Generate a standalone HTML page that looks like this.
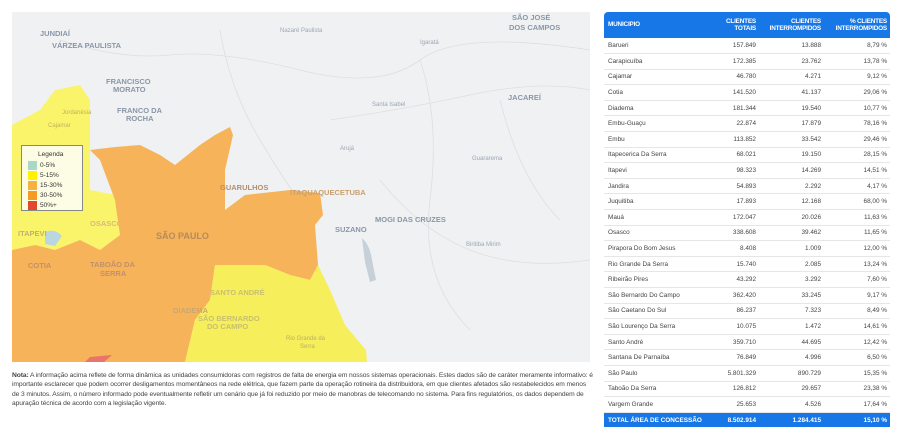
<!DOCTYPE html>
<html><head><meta charset="utf-8"><style>
*{margin:0;padding:0;box-sizing:border-box}
body{width:900px;height:428px;background:#fff;font-family:"Liberation Sans",sans-serif;position:relative;overflow:hidden}
.map{position:absolute;left:12px;top:12px;width:578px;height:350px;background:#f0f1f2;overflow:hidden}
.note{position:absolute;left:12px;top:371px;width:582px;font-size:6.7px;line-height:9.3px;color:#444;letter-spacing:-0.1px}
table{position:absolute;left:604px;top:12px;width:286px;border-collapse:collapse;font-size:6.4px;color:#444}
th{background:#1877e6;color:#fff;font-weight:bold;font-size:6.4px;line-height:7.5px;height:26px;text-align:right;padding:0 3px;letter-spacing:-0.2px}
th:first-child{text-align:left;border-radius:4px 0 0 0;padding-left:4px}
th:last-child{border-radius:0 4px 0 0}
td{height:15.6px;border-bottom:1px solid #e6e6e6;text-align:right;padding:0 3px}
td:first-child{text-align:left;padding-left:4px}
tr.tot td{background:#1877e6;color:#fff;border:none;height:15px;font-weight:bold}
.lg{position:absolute;left:21px;top:145px;width:62px;height:66px;background:#fdfde6;border:1px solid #888;font-size:6.5px;color:#333}
.lg div{position:absolute;left:6px;height:10px;line-height:10px}
.lg span{display:inline-block;width:9px;height:9px;vertical-align:middle;margin-right:3px}
</style></head><body>
<div class="map">
<svg width="578" height="350" viewBox="12 12 578 350" xmlns="http://www.w3.org/2000/svg" font-family="Liberation Sans" font-weight="bold">
<g stroke="#dcdfe2" fill="none" stroke-width="0.8">
<path d="M60 40 Q120 60 170 55 T300 70 T420 60 T590 50"/>
<path d="M220 30 Q230 90 260 140 T300 200"/>
<path d="M330 120 Q400 110 470 95 T590 90"/>
<path d="M380 180 Q420 230 470 250 T590 260"/>
<path d="M420 60 Q440 120 430 200 T470 330"/>
<path d="M500 100 Q520 180 560 220"/>
</g>
<polygon fill="#faf46a" points="12,125 40,110 55,90 80,85 90,100 90,190 115,195 120,235 100,250 80,240 55,250 35,245 12,250"/>
<polygon fill="#f6b35a" points="90,150 115,147 140,145 160,155 175,165 200,145 215,135 230,127 233,135 225,170 225,210 245,195 290,190 320,193 323,215 315,225 318,265 310,280 290,275 265,265 245,265 215,265 210,300 195,320 185,362 12,362 12,250 35,245 55,250 80,240 100,250 120,235 115,200 100,160"/>
<polygon fill="#f6ee5a" points="215,265 245,265 265,265 290,275 310,280 318,265 330,290 345,325 366,350 367,362 185,362 195,320 210,300"/>
<polygon fill="#e8746a" points="85,362 90,357 112,355 104,362"/>
<path d="M45 232 Q55 228 62 236 L55 246 L45 244 Z" fill="#b9d6e2"/>
<path d="M362 238 Q370 245 372 260 L376 280 L370 282 L365 262 Z" fill="#c6d0d8"/>
<g fill="#8a97a8" font-size="7.5">
<text x="40" y="36">JUNDIAÍ</text><text x="52" y="48">VÁRZEA PAULISTA</text>
<text x="106" y="84">FRANCISCO</text><text x="113" y="92">MORATO</text>
<text x="117" y="113">FRANCO DA</text><text x="126" y="121">ROCHA</text>
<text x="509" y="30">DOS CAMPOS</text><text x="512" y="20">SÃO JOSÉ</text>
<text x="508" y="100">JACAREÍ</text><text x="220" y="190" fill="#b09070">GUARULHOS</text>
<text x="290" y="195" fill="#c8a070">ITAQUAQUECETUBA</text><text x="335" y="232">SUZANO</text>
<text x="375" y="222">MOGI DAS CRUZES</text>
<text x="156" y="239" fill="#b58a5a" font-size="9">SÃO PAULO</text>
<text x="90" y="226" fill="#d8b880">OSASCO</text><text x="28" y="268" fill="#c0906a">COTIA</text>
<text x="90" y="267" fill="#c0906a">TABOÃO DA</text><text x="100" y="276" fill="#c0906a">SERRA</text>
<text x="210" y="295" fill="#c8c070">SANTO ANDRÉ</text><text x="173" y="313" fill="#c8a870">DIADEMA</text>
<text x="198" y="321" fill="#c8c070">SÃO BERNARDO</text><text x="207" y="329" fill="#c8c070">DO CAMPO</text>
<text x="18" y="236" fill="#c0b070">ITAPEVI</text>
</g>
<g fill="#9aa6b4" font-size="6" font-weight="normal">
<text x="280" y="32">Nazaré Paulista</text><text x="420" y="44">Igaratá</text>
<text x="372" y="106">Santa Isabel</text><text x="340" y="150">Arujá</text>
<text x="472" y="160">Guararema</text><text x="466" y="246">Biritiba Mirim</text>
<text x="62" y="114" fill="#c0b060">Jordanésia</text><text x="48" y="127" fill="#c0b060">Cajamar</text>
<text x="286" y="340" fill="#b8b060">Rio Grande da</text><text x="300" y="348" fill="#b8b060">Serra</text>
</g>
</svg>
</div>
<div class="lg">
<div style="top:4px;left:16px">Legenda</div>
<div style="top:15px"><span style="background:#a8d8c8"></span>0-5%</div>
<div style="top:25px"><span style="background:#fff200"></span>5-15%</div>
<div style="top:35px"><span style="background:#f8b040"></span>15-30%</div>
<div style="top:45px"><span style="background:#f79a20"></span>30-50%</div>
<div style="top:55px"><span style="background:#e04a2a"></span>50%+</div>
</div>
<div class="note"><b>Nota:</b> A informação acima reflete de forma dinâmica as unidades consumidoras com registros de falta de energia em nossos sistemas operacionais. Estes dados são de caráter meramente informativo: é importante esclarecer que podem ocorrer desligamentos momentâneos na rede elétrica, que fazem parte da operação rotineira da distribuidora, em que clientes afetados são restabelecidos em menos de 3 minutos. Assim, o número informado pode eventualmente refletir um cenário que já foi reduzido por meio de manobras de telecomando no sistema. Para fins regulatórios, os dados dependem de apuração técnica de acordo com a legislação vigente.</div>
<table>
<tr><th style="width:115px">MUNICIPIO</th><th style="width:40px">CLIENTES<br>TOTAIS</th><th style="width:65px">CLIENTES<br>INTERROMPIDOS</th><th>% CLIENTES<br>INTERROMPIDOS</th></tr>
<tr><td>Barueri</td><td>157.849</td><td>13.888</td><td>8,79 %</td></tr>
<tr><td>Carapicuíba</td><td>172.385</td><td>23.762</td><td>13,78 %</td></tr>
<tr><td>Cajamar</td><td>46.780</td><td>4.271</td><td>9,12 %</td></tr>
<tr><td>Cotia</td><td>141.520</td><td>41.137</td><td>29,06 %</td></tr>
<tr><td>Diadema</td><td>181.344</td><td>19.540</td><td>10,77 %</td></tr>
<tr><td>Embu-Guaçu</td><td>22.874</td><td>17.879</td><td>78,16 %</td></tr>
<tr><td>Embu</td><td>113.852</td><td>33.542</td><td>29,46 %</td></tr>
<tr><td>Itapecerica Da Serra</td><td>68.021</td><td>19.150</td><td>28,15 %</td></tr>
<tr><td>Itapevi</td><td>98.323</td><td>14.269</td><td>14,51 %</td></tr>
<tr><td>Jandira</td><td>54.893</td><td>2.292</td><td>4,17 %</td></tr>
<tr><td>Juquitiba</td><td>17.893</td><td>12.168</td><td>68,00 %</td></tr>
<tr><td>Mauá</td><td>172.047</td><td>20.026</td><td>11,63 %</td></tr>
<tr><td>Osasco</td><td>338.608</td><td>39.462</td><td>11,65 %</td></tr>
<tr><td>Pirapora Do Bom Jesus</td><td>8.408</td><td>1.009</td><td>12,00 %</td></tr>
<tr><td>Rio Grande Da Serra</td><td>15.740</td><td>2.085</td><td>13,24 %</td></tr>
<tr><td>Ribeirão Pires</td><td>43.292</td><td>3.292</td><td>7,60 %</td></tr>
<tr><td>São Bernardo Do Campo</td><td>362.420</td><td>33.245</td><td>9,17 %</td></tr>
<tr><td>São Caetano Do Sul</td><td>86.237</td><td>7.323</td><td>8,49 %</td></tr>
<tr><td>São Lourenço Da Serra</td><td>10.075</td><td>1.472</td><td>14,61 %</td></tr>
<tr><td>Santo André</td><td>359.710</td><td>44.695</td><td>12,42 %</td></tr>
<tr><td>Santana De Parnaíba</td><td>76.849</td><td>4.996</td><td>6,50 %</td></tr>
<tr><td>São Paulo</td><td>5.801.329</td><td>890.729</td><td>15,35 %</td></tr>
<tr><td>Taboão Da Serra</td><td>126.812</td><td>29.657</td><td>23,38 %</td></tr>
<tr><td>Vargem Grande</td><td>25.653</td><td>4.526</td><td>17,64 %</td></tr>
<tr class="tot"><td>TOTAL ÁREA DE CONCESSÃO</td><td>8.502.914</td><td>1.284.415</td><td>15,10 %</td></tr>
</table>
</body></html>
